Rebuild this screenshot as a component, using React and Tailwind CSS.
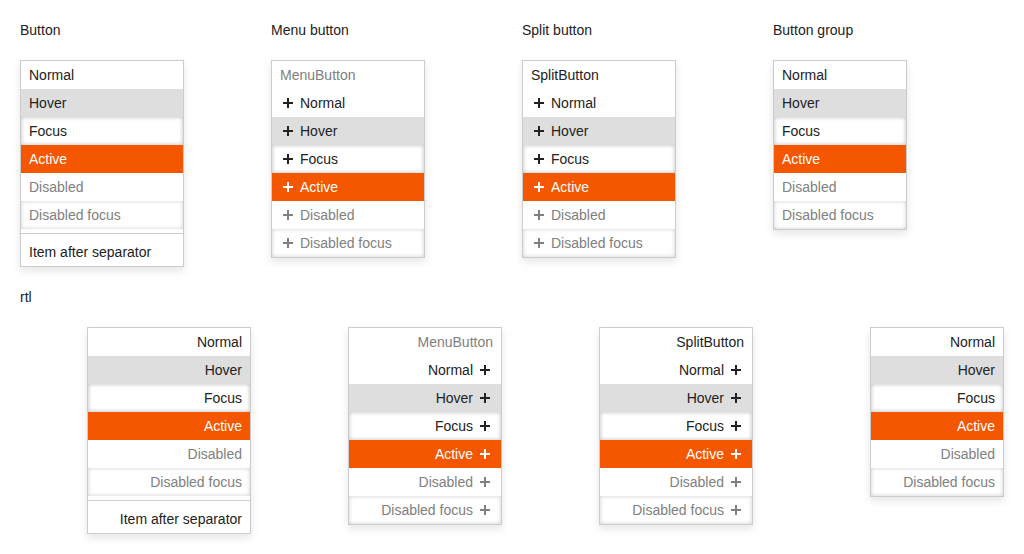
import React from 'react';

const TEXT = 'text-[#222222]';
const DIM = 'text-[#808080]';

const itemStyles = {
  normal: `bg-white ${TEXT}`,
  hover: `bg-[#dedede] ${TEXT}`,
  focus: `bg-white ${TEXT} shadow-[inset_0_0_4px_rgba(0,0,0,0.28)]`,
  active: 'bg-[#f55600] text-white',
  disabled: `bg-white ${DIM}`,
  disabledFocus: `bg-white ${DIM} shadow-[inset_0_0_4px_rgba(0,0,0,0.2)]`,
};

const rows = [
  { label: 'Normal', kind: 'normal' },
  { label: 'Hover', kind: 'hover' },
  { label: 'Focus', kind: 'focus' },
  { label: 'Active', kind: 'active' },
  { label: 'Disabled', kind: 'disabled' },
  { label: 'Disabled focus', kind: 'disabledFocus' },
];

const Plus = () => (
  <svg width="16" height="16" viewBox="0 0 16 16" className="flex-shrink-0">
    <path d="M8 3v10M3 8h10" stroke="currentColor" strokeWidth="2" fill="none" />
  </svg>
);

const Item = ({ label, kind, icon }) => (
  <div className={`h-7 flex items-center ps-2 pe-8 gap-1 ${itemStyles[kind]}`}>
    {icon && <Plus />}
    <span className="whitespace-nowrap">{label}</span>
  </div>
);

const Menu = ({ width, children }) => (
  <div className={`${width} flex flex-col bg-white border border-[#cccccc] shadow-[0_4px_8px_0_rgba(0,0,0,0.1)]`}>
    {children}
  </div>
);

const ButtonMenu = () => (
  <Menu width="w-[164px]">
    {rows.map((r) => <Item key={r.kind} {...r} />)}
    <div className="h-[9px] flex flex-col justify-center">
      <div className="h-px bg-[#cccccc]"></div>
    </div>
    <Item label="Item after separator" kind="normal" />
  </Menu>
);

const IconMenu = ({ header, headerDim }) => (
  <Menu width="w-[154px]">
    <div className={`h-7 flex items-center ps-2 pe-8 ${headerDim ? DIM : TEXT}`}>{header}</div>
    {rows.map((r) => <Item key={r.kind} {...r} icon />)}
  </Menu>
);

const GroupMenu = () => (
  <Menu width="w-[134px]">
    {rows.map((r) => <Item key={r.kind} {...r} />)}
  </Menu>
);

const menus = [
  { title: 'Button', el: <ButtonMenu /> },
  { title: 'Menu button', el: <IconMenu header="MenuButton" headerDim /> },
  { title: 'Split button', el: <IconMenu header="SplitButton" /> },
  { title: 'Button group', el: <GroupMenu /> },
];

export default function App() {
  return (
    <div className="w-[1024px] h-[554px] bg-white pt-5 text-[14px] text-[#222222]" style={{ fontFamily: '"Liberation Sans", Arial, sans-serif' }}>
      <div className="flex items-start">
        {menus.map((m) => (
          <div key={m.title} className="w-[251px] pl-5">
            <div className="leading-5 mb-5">{m.title}</div>
            {m.el}
          </div>
        ))}
      </div>
      <div className="pl-5 mt-5 leading-5 mb-5">rtl</div>
      <div className="flex items-start">
        {menus.map((m) => (
          <div key={m.title} className="w-[251px] pl-5">
            <div dir="rtl">{m.el}</div>
          </div>
        ))}
      </div>
    </div>
  );
}
